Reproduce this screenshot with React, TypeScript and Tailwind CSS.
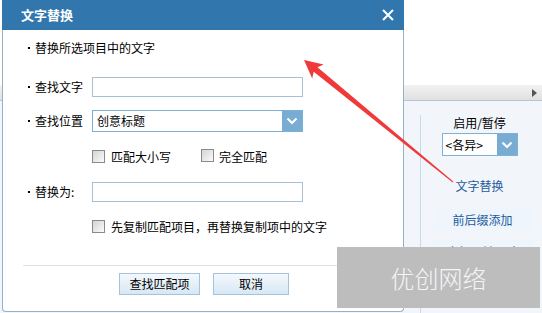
import React from "react";

const font = { fontFamily: '"Noto Sans CJK SC", "Noto Sans", sans-serif' };

function Checkbox() {
  return (
    <span className="inline-block w-[13px] h-[13px] border border-[#8a8a8a] bg-gradient-to-br from-[#d4d4d4] to-[#fbfbfb] shrink-0" />
  );
}

function Chevron() {
  return (
    <svg width="12" height="8" viewBox="0 0 12 8">
      <path d="M1.5 1.5 L6 6 L10.5 1.5" stroke="white" strokeWidth="2.2" fill="none" />
    </svg>
  );
}

function Label({ text }: { text: string }) {
  return (
    <div className="w-[64px] flex items-center shrink-0">
      <span className="w-[2px] h-[2px] bg-black mr-[5px]" />
      <span>{text}</span>
    </div>
  );
}

export default function App() {
  return (
    <div
      className="relative w-[542px] h-[313px] bg-white overflow-hidden text-[12px] leading-[16px] text-black"
      style={font}
    >
      {/* background application */}
      <div className="flex flex-col h-full">
        <div className="h-[85px] bg-white" />
        <div className="h-[16px] bg-gradient-to-b from-[#f2f2f2] to-[#e0e0e0] border-b border-[#b3c7d8] flex justify-end items-center pr-[5px]">
          <svg width="5" height="8" viewBox="0 0 5 8">
            <path d="M0 0 L5 4 L0 8 Z" fill="#555" />
          </svg>
        </div>
        <div className="flex-1 flex bg-[#f2f6fb]">
          <div className="w-[420px] shrink-0" />
          <div className="flex-1 mt-[14px] border-l border-[#c6daec] flex flex-col items-center pr-[4px]">
            <div className="leading-[16px]">启用/暂停</div>
            <div className="mt-[2px] w-[76px] h-[23px] border border-[#7fb0d5] bg-white flex">
              <div className="flex-1 flex items-center pl-[3px]">&lt;各异&gt;</div>
              <div className="w-[20px] bg-[#78acd3] flex items-center justify-center">
                <Chevron />
              </div>
            </div>
            <div className="mt-[22px] text-[#1d5c9c]">文字替换</div>
            <div className="mt-[14px] w-[98px] h-[23px] bg-[#eef5fd] flex items-center justify-center text-[#1d5c9c] ml-[6px]">
              前后缀添加
            </div>
            <div className="mt-[9px] w-[98px] h-[23px] bg-[#eef5fd] flex items-center justify-center text-[#1d5c9c] ml-[6px]">
              高级网址更改
            </div>
          </div>
        </div>
      </div>

      {/* dialog window */}
      <div className="absolute left-[2px] top-0 w-[402px] h-[312px] bg-white border-x border-b border-[#93b2ca] rounded-b-[4px] flex flex-col">
        <div className="h-[30px] bg-[#3176ac] flex items-center justify-between pl-[19px] pr-[10px] -mx-[1px]">
          <span className="text-white font-bold text-[13px] leading-[16px]">文字替换</span>
          <svg width="12" height="12" viewBox="0 0 12 12">
            <path d="M1 1 L11 11 M11 1 L1 11" stroke="white" strokeWidth="2" />
          </svg>
        </div>
        <div className="flex flex-col pt-[10px]">
          <div className="h-[16px] pl-[25px] flex items-center">
            <span className="w-[2px] h-[2px] bg-black mr-[5px]" />
            <span>替换所选项目中的文字</span>
          </div>
          <div className="mt-[21px] h-[20px] pl-[25px] flex items-center">
            <Label text="查找文字" />
            <div className="w-[211px] h-[20px] border border-[#a9c0d4] bg-white" />
          </div>
          <div className="mt-[13px] h-[22px] pl-[25px] flex items-center">
            <Label text="查找位置" />
            <div className="w-[211px] h-[22px] border border-[#7ab0d6] bg-white flex">
              <div className="flex-1 flex items-center pl-[4px]">创意标题</div>
              <div className="w-[20px] bg-[#78acd3] flex items-center justify-center">
                <Chevron />
              </div>
            </div>
          </div>
          <div className="mt-[18px] h-[13px] pl-[89px] flex items-center">
            <Checkbox />
            <span className="ml-[6px]">匹配大小写</span>
            <span className="ml-[30px]"><Checkbox /></span>
            <span className="ml-[5px]">完全匹配</span>
          </div>
          <div className="mt-[19px] h-[20px] pl-[25px] flex items-center">
            <Label text="替换为:" />
            <div className="w-[211px] h-[20px] border border-[#a9c0d4] bg-white" />
          </div>
          <div className="mt-[18px] h-[13px] pl-[89px] flex items-center">
            <Checkbox />
            <span className="ml-[6px]">先复制匹配项目，再替换复制项中的文字</span>
          </div>
          <div className="mt-[32px] ml-[20px] mr-[16px] h-[1px] bg-[#e2e2e2]" />
          <div className="mt-[7px] pl-[116px] flex gap-[13px]">
            <button className="w-[81px] h-[22px] border border-[#a5c4dc] bg-gradient-to-b from-[#f5f9fd] to-[#d6e7f4] text-[12px] leading-[16px]">
              查找匹配项
            </button>
            <button className="w-[76px] h-[22px] border border-[#a5c4dc] bg-gradient-to-b from-[#f5f9fd] to-[#d6e7f4] text-[12px] leading-[16px]">
              取消
            </button>
          </div>
        </div>
      </div>

      {/* red annotation arrow */}
      <svg className="absolute left-0 top-0 pointer-events-none" width="542" height="313">
        <polygon
          points="304,60 323.6,64.4 317.5,67.2 453.3,181.6 452.7,182.4 313.7,71.8 312.2,78.4"
          fill="#f03a3a"
        />
      </svg>

      {/* watermark */}
      <div className="absolute left-[337px] top-[247px] w-[203px] h-[61px] bg-[#bdbdbd] flex items-center justify-center">
        <span className="text-[#f5f5f5] text-[24px] leading-[28px] font-light">优创网络</span>
      </div>
    </div>
  );
}
